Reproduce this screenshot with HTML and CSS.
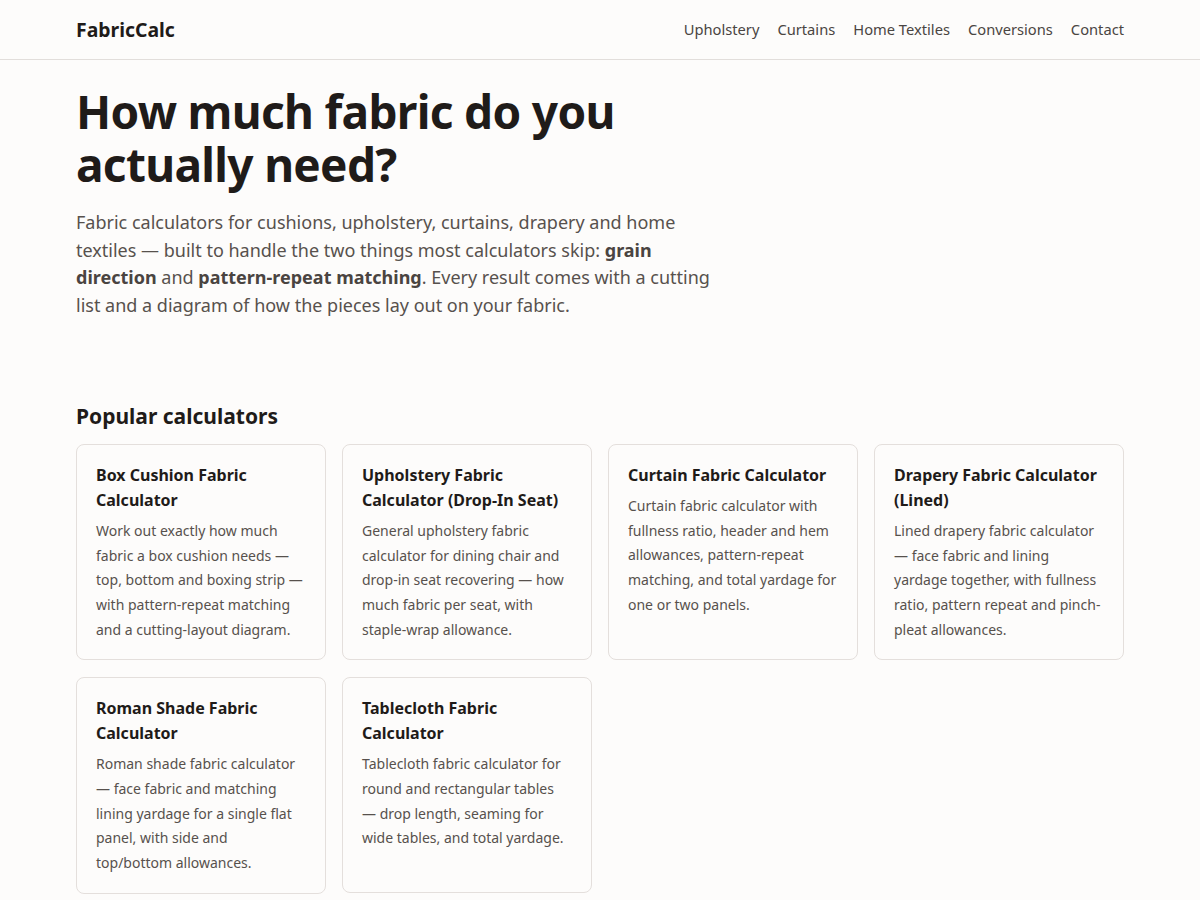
FILE: index.html
```html
<!DOCTYPE html>
<html lang="en">
<head>
<meta charset="utf-8">
<title>FabricCalc</title>
<link rel="stylesheet" href="styles.css">
</head>
<body>
<header class="site-header">
  <div class="container header-inner">
    <a class="logo" href="#">FabricCalc</a>
    <nav class="nav">
      <a href="#">Upholstery</a>
      <a href="#">Curtains</a>
      <a href="#">Home Textiles</a>
      <a href="#">Conversions</a>
      <a href="#">Contact</a>
    </nav>
  </div>
</header>
<main class="container">
  <section class="hero">
    <h1>How much fabric do you actually need?</h1>
    <p>Fabric calculators for cushions, upholstery, curtains, drapery and home textiles — built to handle the two things most calculators skip: <strong>grain direction</strong> and <strong>pattern-repeat matching</strong>. Every result comes with a cutting list and a diagram of how the pieces lay out on your fabric.</p>
  </section>
  <section class="popular">
    <h2>Popular calculators</h2>
    <div class="grid">
      <a class="card" href="#">
        <h3>Box Cushion Fabric Calculator</h3>
        <p>Work out exactly how much fabric a box cushion needs — top, bottom and boxing strip — with pattern-repeat matching and a cutting-layout diagram.</p>
      </a>
      <a class="card" href="#">
        <h3>Upholstery Fabric Calculator (Drop-In Seat)</h3>
        <p>General upholstery fabric calculator for dining chair and drop-in seat recovering — how much fabric per seat, with staple-wrap allowance.</p>
      </a>
      <a class="card" href="#">
        <h3>Curtain Fabric Calculator</h3>
        <p>Curtain fabric calculator with fullness ratio, header and hem allowances, pattern-repeat matching, and total yardage for one or two panels.</p>
      </a>
      <a class="card" href="#">
        <h3>Drapery Fabric Calculator (Lined)</h3>
        <p>Lined drapery fabric calculator — face fabric and lining yardage together, with fullness ratio, pattern repeat and pinch-pleat allowances.</p>
      </a>
      <a class="card" href="#">
        <h3>Roman Shade Fabric Calculator</h3>
        <p>Roman shade fabric calculator — face fabric and matching lining yardage for a single flat panel, with side and top/bottom allowances.</p>
      </a>
      <a class="card" href="#">
        <h3>Tablecloth Fabric Calculator</h3>
        <p>Tablecloth fabric calculator for round and rectangular tables — drop length, seaming for wide tables, and total yardage.</p>
      </a>
    </div>
  </section>
</main>
</body>
</html>
```

FILE: styles.css
```css
* { box-sizing: border-box; }
html, body { margin: 0; padding: 0; }
body {
  background: #fdfcfb;
  color: #1f1b19;
  font-family: "Noto Sans", "Open Sans", sans-serif;
}
a { text-decoration: none; color: inherit; }
.container {
  width: 1048px;
  margin: 0 auto;
}
.site-header {
  border-bottom: 1px solid #e2dedb;
}
.header-inner {
  height: 59px;
  padding-bottom: 1px;
  display: flex;
  align-items: center;
  justify-content: space-between;
}
.logo {
  font-size: 19.4px;
  font-weight: 700;
  color: #1f1b19;
}
.nav {
  display: flex;
  gap: 18px;
}
.nav a {
  font-size: 14.7px;
  color: #4a4542;
}
.hero {
  padding-top: 25px;
}
.hero h1 {
  margin: 0;
  font-size: 46px;
  letter-spacing: -0.015em;
  line-height: 53px;
  font-weight: 700;
  max-width: 660px;
  color: #1f1b19;
}
.hero p {
  margin: 18px 0 0;
  max-width: 640px;
  font-size: 18px;
  line-height: 27.7px;
  color: #57514d;
}
.hero p strong { color: #4a4441; font-weight: 700; }
.popular {
  margin-top: 82px;
}
.popular h2 {
  margin: 0 0 14px;
  font-size: 21px;
  line-height: 28px;
  font-weight: 700;
}
.grid {
  display: grid;
  grid-template-columns: repeat(4, 1fr);
  gap: 17px 16px;
  align-items: start;
}
.card {
  display: block;
  border: 1px solid #e4dfdc;
  border-radius: 8px;
  padding: 18px 20px 17px 19px;
  background: #fdfcfb;
  min-height: 216px;
}
.card h3 {
  margin: 0;
  font-size: 16px;
  line-height: 25px;
  font-weight: 700;
  color: #1f1b19;
}
.card p {
  margin: 6px 0 0;
  font-size: 14px;
  line-height: 24.7px;
  color: #57514d;
}
```
